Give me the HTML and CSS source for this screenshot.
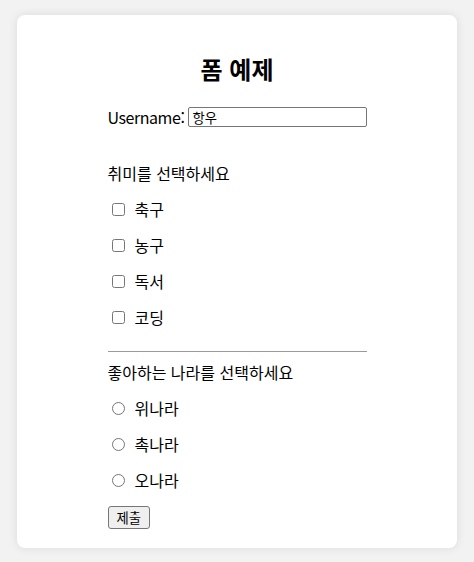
FILE: index.html
```html
<!DOCTYPE html>
<html lang="ko">
<head>
<meta charset="utf-8">
<title>폼 예제</title>
<link rel="stylesheet" href="styles.css">
</head>
<body>
<div class="card">
  <form class="form">
    <h2 class="title">폼 예제</h2>
    <div class="row">
      <label class="label" for="username">Username:</label>
      <input id="username" class="text" type="text" value="항우">
    </div>
    <p class="heading first">취미를 선택하세요</p>
    <label class="opt"><input type="checkbox"> <span>축구</span></label>
    <label class="opt"><input type="checkbox"> <span>농구</span></label>
    <label class="opt"><input type="checkbox"> <span>독서</span></label>
    <label class="opt"><input type="checkbox"> <span>코딩</span></label>
    <hr class="sep">
    <p class="heading">좋아하는 나라를 선택하세요</p>
    <label class="opt"><input type="radio" name="c"> <span>위나라</span></label>
    <label class="opt"><input type="radio" name="c"> <span>촉나라</span></label>
    <label class="opt"><input type="radio" name="c"> <span>오나라</span></label>
    <button class="submit" type="button">제출</button>
  </form>
</div>
</body>
</html>
```
FILE: styles.css
```css
html, body { margin: 0; padding: 0; }
body {
  background: #f2f2f2;
  padding: 15px 17px 14px;
  font-family: "Noto Sans CJK KR", "Noto Sans", sans-serif;
  font-size: 16px;
  color: #000;
}
.card {
  background: #fff;
  border-radius: 8px;
  box-shadow: 0 0 10px rgba(0,0,0,0.1);
  height: 533px;
  box-sizing: border-box;
  padding-top: 39px;
}
.form {
  width: 259px;
  margin: 0 auto;
  display: flex;
  flex-direction: column;
  align-items: flex-start;
}
.title {
  align-self: stretch;
  text-align: center;
  font-size: 24px;
  font-weight: bold;
  line-height: 30px;
  margin: 0 0 23px;
}
.row {
  display: flex;
  align-items: center;
  gap: 4px;
  height: 20px;
  line-height: 20px;
  width: 100%;
}
.label { letter-spacing: -0.45px; white-space: nowrap; }
.text {
  flex: 1;
  min-width: 0;
  height: 20px;
  box-sizing: border-box;
  border: 1px solid #767676;
  border-radius: 2px;
  padding: 0 3px;
  font: 13.33px "Noto Sans CJK KR", sans-serif;
  margin: 0;
}
.heading {
  margin: 10px 0 16px;
  line-height: 20px;
}
.heading.first { margin-top: 36px; }
.opt {
  display: flex;
  align-items: center;
  line-height: 20px;
  height: 20px;
  margin-bottom: 16px;
}
.opt input {
  margin: 0 10px 0 4px;
  width: 13px;
  height: 13px;
}
.opt span { display: block; }
.sep {
  align-self: stretch;
  border: none;
  border-top: 1px solid #9a9a9a;
  height: 0;
  margin: 8px 0 0;
}
.submit {
  font: 13.33px "Noto Sans CJK KR", sans-serif;
  height: 23px;
  padding: 0 8px;
  border: 1px solid #767676;
  border-radius: 3px;
  background: #efefef;
  color: #000;
  line-height: 20px;
}
```
